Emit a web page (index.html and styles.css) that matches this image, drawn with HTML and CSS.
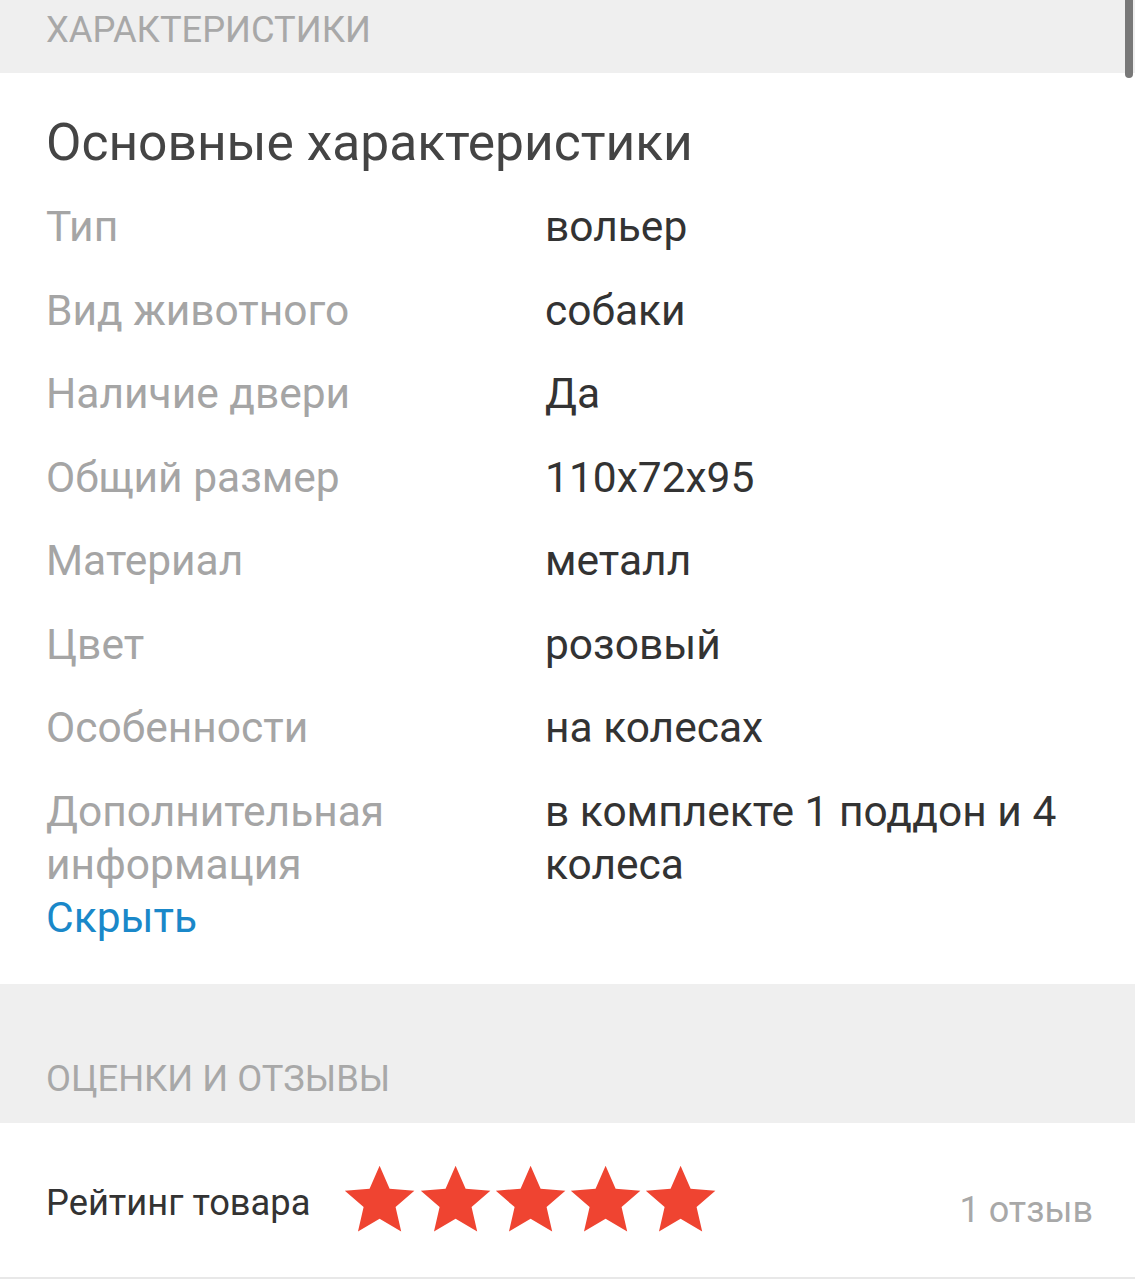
FILE: index.html
```html
<!DOCTYPE html>
<html lang="ru">
<head>
<meta charset="utf-8">
<link rel="stylesheet" href="styles.css">
</head>
<body>
<div class="page">
  <div class="section-head top"><span>ХАРАКТЕРИСТИКИ</span></div>
  <div class="panel specs">
    <h2 class="title">Основные характеристики</h2>
    <div class="rows">
      <div class="row"><div class="label">Тип</div><div class="value">вольер</div></div>
      <div class="row"><div class="label">Вид животного</div><div class="value">собаки</div></div>
      <div class="row"><div class="label">Наличие двери</div><div class="value">Да</div></div>
      <div class="row"><div class="label">Общий размер</div><div class="value">110x72x95</div></div>
      <div class="row"><div class="label">Материал</div><div class="value">металл</div></div>
      <div class="row"><div class="label">Цвет</div><div class="value">розовый</div></div>
      <div class="row"><div class="label">Особенности</div><div class="value">на колесах</div></div>
      <div class="row"><div class="label">Дополнительная информация</div><div class="value">в комплекте 1 поддон и 4 колеса</div></div>
    </div>
    <a class="hide-link">Скрыть</a>
  </div>
  <div class="section-head reviews"><span>ОЦЕНКИ И ОТЗЫВЫ</span></div>
  <div class="panel rating">
    <div class="rating-label">Рейтинг товара</div>
    <div class="stars">
      <svg class="star" viewBox="0 0 24 24"><path d="M12 1.2l3.2 7.3 7.9.7-6 5.2 1.8 7.8L12 18.1l-6.9 4.1 1.8-7.8-6-5.2 7.9-.7z"/></svg>
      <svg class="star" viewBox="0 0 24 24"><path d="M12 1.2l3.2 7.3 7.9.7-6 5.2 1.8 7.8L12 18.1l-6.9 4.1 1.8-7.8-6-5.2 7.9-.7z"/></svg>
      <svg class="star" viewBox="0 0 24 24"><path d="M12 1.2l3.2 7.3 7.9.7-6 5.2 1.8 7.8L12 18.1l-6.9 4.1 1.8-7.8-6-5.2 7.9-.7z"/></svg>
      <svg class="star" viewBox="0 0 24 24"><path d="M12 1.2l3.2 7.3 7.9.7-6 5.2 1.8 7.8L12 18.1l-6.9 4.1 1.8-7.8-6-5.2 7.9-.7z"/></svg>
      <svg class="star" viewBox="0 0 24 24"><path d="M12 1.2l3.2 7.3 7.9.7-6 5.2 1.8 7.8L12 18.1l-6.9 4.1 1.8-7.8-6-5.2 7.9-.7z"/></svg>
    </div>
    <div class="count">1 отзыв</div>
  </div>
  <div class="scrollbar"></div>
</div>
</body>
</html>
```

FILE: styles.css
```css
html, body {
  margin: 0;
  padding: 0;
  background: #ffffff;
}
body {
  font-family: Roboto, "Noto Sans", sans-serif;
  width: 1135px;
  height: 1280px;
  overflow: hidden;
}
.page {
  position: relative;
  width: 1135px;
}
.section-head {
  background: #efefef;
  color: #a8a8a8;
  font-size: 36.3px;
  padding-left: 46px;
  box-sizing: border-box;
}
.section-head.top {
  height: 73px;
  padding-top: 7px;
  line-height: 46px;
}
.section-head.reviews {
  height: 139px;
  padding-top: 72px;
  line-height: 46px;
}
.panel {
  background: #fff;
  padding: 0 46px;
}
.specs {
  padding-top: 40px;
  padding-bottom: 40px;
}
.title {
  margin: 0 0 27px;
  font-weight: 400;
  font-size: 51.5px;
  line-height: 60px;
  color: #444;
}
.rows {
  display: flex;
  flex-direction: column;
  gap: 30.5px;
}
.row {
  display: grid;
  grid-template-columns: 499px 1fr;
  font-size: 42.5px;
  line-height: 53px;
}
.label { color: #a5a5a5; }
.value { color: #333; }
.hide-link {
  display: block;
  color: #1a88c9;
  font-size: 42.5px;
  line-height: 53px;
}
.rating {
  display: flex;
  align-items: center;
  height: 154px;
  border-bottom: 2px solid #e8e8e8;
}
.rating-label {
  font-size: 36.3px;
  color: #333;
  margin-right: 32px;
  margin-top: 6px;
}
.stars {
  display: flex;
}
.star {
  width: 75.2px;
  height: 75.2px;
  fill: #ef4431;
}
.count {
  margin-left: auto;
  font-size: 36px;
  color: #a8a8a8;
  margin-right: -4px;
  margin-top: 20px;
}
.scrollbar {
  position: absolute;
  top: 0;
  right: 2px;
  width: 8px;
  height: 78px;
  border-radius: 0 0 4px 4px;
  background: #787878;
}
```
